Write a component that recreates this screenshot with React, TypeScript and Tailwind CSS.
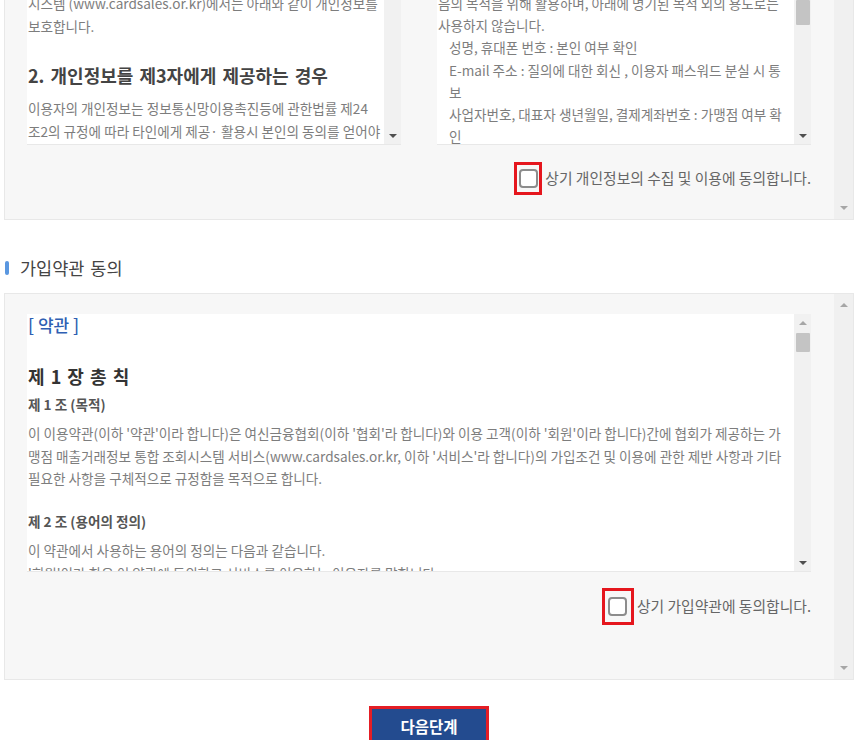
import React from "react";

const Arrow = ({ dir, dark }: { dir: "up" | "down"; dark?: boolean }) => (
  <svg width="8" height="4" viewBox="0 0 8 4" className={dark ? "fill-[#4f4f4f]" : "fill-[#a6a6a6]"}>
    {dir === "up" ? <path d="M0 4 L4 0 L8 4 Z" /> : <path d="M0 0 L8 0 L4 4 Z" />}
  </svg>
);

// scrollbar inside the white text boxes
const InnerScroll = ({ thumbTop, upDark }: { thumbTop: string; upDark?: boolean }) => (
  <div className="flex w-[17px] shrink-0 flex-col items-center bg-[#f1f1f1]">
    <div className="flex h-[17px] w-full items-center justify-center">
      <Arrow dir="up" dark={upDark} />
    </div>
    <div className={`w-[14px] rounded-[1px] bg-[#c4c4c4] ${thumbTop}`} />
    <div className="flex-1" />
    <div className="flex h-[17px] w-full items-center justify-center">
      <Arrow dir="down" dark />
    </div>
  </div>
);

// scrollbar of the grey panels
const OuterScroll = () => (
  <div className="flex w-[19px] shrink-0 flex-col justify-between bg-[#f0f0f0]">
    <div className="flex h-[21px] items-center justify-center">
      <Arrow dir="up" />
    </div>
    <div className="flex h-[23px] items-center justify-center">
      <Arrow dir="down" />
    </div>
  </div>
);

const SectionTitle = ({ children }: { children: React.ReactNode }) => (
  <div className="flex h-[24px] items-center">
    <span className="ml-px h-[14px] w-[4px] rounded-full bg-[#5a97e0]" />
    <h3 className="ml-[11px] text-[17.5px] leading-[24px] text-[#444] [word-spacing:2px]">{children}</h3>
  </div>
);

const AgreeRow = ({
  label,
  boxClass,
  className,
}: {
  label: string;
  boxClass: string;
  className: string;
}) => (
  <div className={`flex items-center justify-end ${className}`}>
    <label className="flex cursor-pointer items-center">
      <span className={`flex items-center justify-center border-[3px] border-[#e5161d] ${boxClass}`}>
        <span className="h-[19px] w-[19px] rounded-[4px] border-2 border-[#8c8c8c] bg-white" />
      </span>
      <span className="ml-[3px] text-[14.8px] leading-none text-[#666]">{label}</span>
    </label>
  </div>
);

export default function App() {
  return (
    <div className="min-h-[740px] bg-white font-['Noto_Sans_CJK_KR','Noto_Sans',sans-serif]">
      <div className="-mt-[171px] pb-[40px] pl-[4px] pr-px">
        {/* 개인정보 수집 및 이용 동의 */}
        <SectionTitle>개인정보 수집 및 이용 동의</SectionTitle>
        <div className="mt-[13px] flex border border-[#e8e8e8] bg-[#f7f7f7]">
          <div className="flex-1 pb-[24px] pl-[22px] pr-[23px] pt-[20px]">
            <div className="flex gap-[36px]">
              <div className="flex h-[258px] w-[374px] border-b border-[#e8e8e8] bg-white">
                <div className="flex-1 overflow-hidden pl-px pr-[3px] text-[13.6px] leading-[23px] text-[#7d7d7d]">
                  <p className="text-[17px] font-medium leading-[22px] text-[#2f5fb3]">[ 개인정보처리방침 ]</p>
                  <h4 className="mt-[20px] text-[18px] font-bold leading-[35px] text-[#444] [word-spacing:2px]">1. 개인정보 보호정책</h4>
                  <p className="mt-[4.5px]">
                    여신금융협회 가맹점 매출거래정보 통합 조회
                    <br />
                    시스템 (www.cardsales.or.kr)에서는 아래와 같이 개인정보를 보호합니다.
                  </p>
                  <h4 className="mt-[20px] text-[18px] font-bold leading-[35px] text-[#444] [word-spacing:2px]">
                    2. 개인정보를 제3자에게 제공하는 경우
                  </h4>
                  <p className="mt-[4px]">
                    이용자의 개인정보는 정보통신망이용촉진등에 관한법률 제24
                    <br />
                    조2의 규정에 따라 타인에게 제공· 활용시 본인의 동의를 얻어야 합니다.
                  </p>
                </div>
                <InnerScroll thumbTop="mt-[40px] h-[25px]" />
              </div>

              <div className="flex h-[258px] w-[374px] border-b border-[#e8e8e8] bg-white">
                <div className="flex-1 overflow-hidden pl-px pr-[2px] text-[13.6px] leading-[22.25px] text-[#7d7d7d]">
                  <p className="text-[17px] font-medium leading-[22px] text-[#2f5fb3]">[ 개인정보 수집 ]</p>
                  <h4 className="mt-[20px] text-[18px] font-bold leading-[35px] text-[#444] [word-spacing:2px]">1. 수집하는 개인정보 항목</h4>
                  <p className="mt-[5.6px]">
                    협회는 이용자로부터 수집한 개인정보를 다
                    <br />
                    음의 목적을 위해 활용하며, 아래에 명기된 목적 외의 용도로는 사용하지 않습니다.
                  </p>
                  <ul className="pl-[11px]">
                    <li>성명, 휴대폰 번호 : 본인 여부 확인</li>
                    <li>E-mail 주소 : 질의에 대한 회신 , 이용자 패스워드 분실 시 통보</li>
                    <li>사업자번호, 대표자 생년월일, 결제계좌번호 : 가맹점 여부 확인</li>
                  </ul>
                </div>
                <InnerScroll thumbTop="mt-[96px] h-[25px]" />
              </div>
            </div>
            <AgreeRow
              className="mt-[17px]"
              boxClass="h-[33px] w-[28px]"
              label="상기 개인정보의 수집 및 이용에 동의합니다."
            />
          </div>
          <OuterScroll />
        </div>

        {/* 가입약관 동의 */}
        <div className="mt-[36px]">
          <SectionTitle>가입약관 동의</SectionTitle>
        </div>
        <div className="mt-[13px] flex border border-[#e8e8e8] bg-[#f7f7f7]">
          <div className="flex-1 pb-[54px] pl-[22px] pr-[23px] pt-[20px]">
            <div className="flex h-[258px] border-b border-[#e8e8e8] bg-white">
              <div className="flex-1 overflow-hidden pl-px pr-[2px] text-[13.6px] leading-[22.5px] text-[#7d7d7d]">
                <p className="text-[17px] font-medium leading-[22px] text-[#2f5fb3]">[ 약관 ]</p>
                <h4 className="mt-[28px] text-[18px] font-bold leading-[24px] text-[#333] [word-spacing:2px]">제 1 장 총 칙</h4>
                <h5 className="mt-[5px] text-[13.6px] font-bold leading-[22px] text-[#555]">제 1 조 (목적)</h5>
                <p className="mt-[7px]">
                  이 이용약관(이하 '약관'이라 합니다)은 여신금융협회(이하 '협회'라 합니다)와 이용 고객(이하 '회원'이라 합니다)간에 협회가 제공하는 가맹점 매출거래정보 통합 조회시스템 서비스(www.cardsales.or.kr, 이하 '서비스'라 합니다)의 가입조건 및 이용에 관한 제반 사항과 기타 필요한 사항을 구체적으로 규정함을 목적으로 합니다.
                </p>
                <h5 className="mt-[20.5px] text-[13.6px] font-bold leading-[22px] text-[#555]">제 2 조 (용어의 정의)</h5>
                <p className="mt-[7px]">이 약관에서 사용하는 용어의 정의는 다음과 같습니다.</p>
                <p>'회원'이라 함은 이 약관에 동의하고 서비스를 이용하는 이용자를 말합니다.</p>
                <p>'아이디(ID)'라 함은 회원의 식별과 서비스 이용을 위하여 회원이 정하고 협회가 승인하는 문자와 숫자의 조합을 말합니다.</p>
              </div>
              <InnerScroll thumbTop="mt-[2px] h-[19px]" />
            </div>
            <AgreeRow className="mt-[16px]" boxClass="h-[37px] w-[32px]" label="상기 가입약관에 동의합니다." />
          </div>
          <OuterScroll />
        </div>

        {/* 다음단계 */}
        <div className="mt-[26px] flex justify-center">
          <button
            type="button"
            className="h-[42px] w-[120px] border-[3px] border-[#e41e25] bg-[#234b8f] text-[15.5px] font-bold text-white"
          >
            다음단계
          </button>
        </div>
      </div>
    </div>
  );
}
